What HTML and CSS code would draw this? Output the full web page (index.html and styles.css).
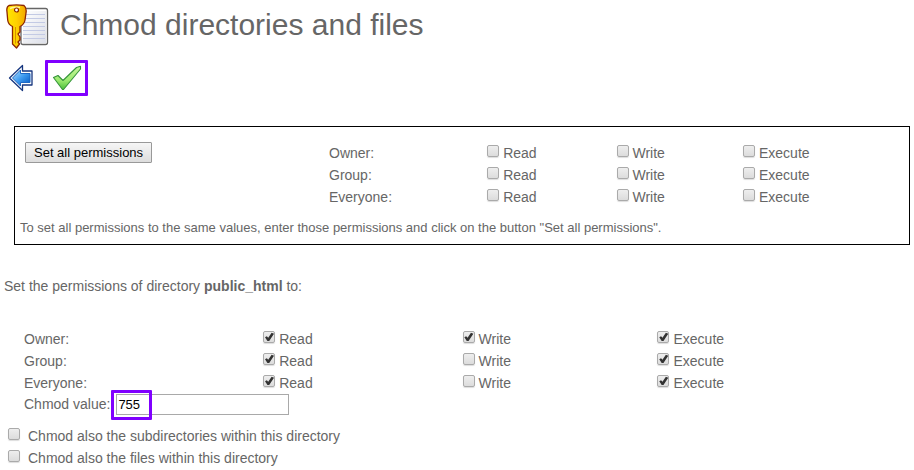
FILE: index.html
```html
<!DOCTYPE html>
<html lang="en">
<head>
<meta charset="utf-8">
<title>Chmod directories and files</title>
<link rel="stylesheet" href="styles.css">
</head>
<body>
<header class="header">
  <svg class="header-icon" viewBox="0 0 44 46" aria-hidden="true">
    <defs>
      <linearGradient id="gold" x1="0" x2="1"><stop offset="0" stop-color="#ffe600"/><stop offset=".5" stop-color="#ffd000"/><stop offset="1" stop-color="#f2a600"/></linearGradient>
      <linearGradient id="paper" x1="0" y1="0" x2="1" y2="1"><stop offset="0" stop-color="#fff"/><stop offset="1" stop-color="#dcdfe8"/></linearGradient>
    </defs>
    <rect x="15" y="4.500" width="26.500" height="36" rx="2" fill="#fff" stroke="#666" stroke-width="1.300"/>
    <rect x="17" y="7" width="23" height="32" fill="url(#paper)"/>
    <path d="M17 10.500h22M17 14.500h22M17 18.500h22M17 22.500h22M17 26.500h22M17 30.500h22M17 34.500h22" stroke="#c3cae4"/>
    <path d="M3 1.500C7 .8 14 .8 18 1.500C20 3 20.500 6 20 9L19 16C18.500 19 17 21 14 22.500V28L12 30L14 33V36L12 38L13.500 40L10.500 44L6.500 40V22.500C3 21 2 19 1.700 16L1 8C.5 5 1 2.500 3 1.500Z" fill="url(#gold)" stroke="#8c2600" stroke-width="1.300" stroke-linejoin="round"/>
    <path d="M4 4.500C7 3 10 3 14 3.500" fill="none" stroke="#fff39a" stroke-width="1.500"/>
    <path d="M9.500 23v16.500" stroke="#d89000" stroke-width="1"/>
    <circle cx="10.500" cy="6" r="2" fill="#fff" stroke="#8c2600" stroke-width="1.200"/>
  </svg>
  <h1 class="title">Chmod directories and files</h1>
</header>

<nav class="toolbar">
  <a class="tool" href="#" aria-label="Back">
    <svg width="26" height="28" viewBox="0 0 26 28" aria-hidden="true">
      <defs><linearGradient id="blue" x1="0" y1="0" x2="1" y2="1"><stop offset="0" stop-color="#b5e4ff"/><stop offset=".5" stop-color="#3e9bf0"/><stop offset="1" stop-color="#0054bd"/></linearGradient></defs>
      <path d="M1.500 14L14.500 1.500V7H24V21H14.500V26.500Z" fill="#fff" stroke="#16367f" stroke-width="1.300" stroke-linejoin="round"/>
      <path d="M4.500 14L12.500 6V9.500H22V18.500H12.500V22Z" fill="url(#blue)" stroke="#1b67c5"/>
    </svg>
  </a>
  <button class="tool tool-marked" type="submit" form="chmod" aria-label="Save">
    <svg width="30" height="26" viewBox="0 0 30 26" aria-hidden="true">
      <defs><linearGradient id="green" x1="0" y1="0" x2="0" y2="1"><stop offset="0" stop-color="#c8f59a"/><stop offset=".6" stop-color="#9bea70"/><stop offset="1" stop-color="#4cc03a"/></linearGradient></defs>
      <path d="M1.500 12.500L6 10.500L11 15.500L24.500 2.500L28.500 1.300V4L11.500 24.500H10.500Z" fill="url(#green)" stroke="#35943a" stroke-width="1.100" stroke-linejoin="round"/>
    </svg>
  </button>
</nav>

<form id="chmod">
  <section class="panel">
    <div class="panel-row">
      <button class="button" type="button">Set all permissions</button>
      <table class="perms perms-all">
        <tr><th scope="row">Owner:</th><td><label class="check"><input type="checkbox">Read</label></td><td><label class="check"><input type="checkbox">Write</label></td><td><label class="check"><input type="checkbox">Execute</label></td></tr>
        <tr><th scope="row">Group:</th><td><label class="check"><input type="checkbox">Read</label></td><td><label class="check"><input type="checkbox">Write</label></td><td><label class="check"><input type="checkbox">Execute</label></td></tr>
        <tr><th scope="row">Everyone:</th><td><label class="check"><input type="checkbox">Read</label></td><td><label class="check"><input type="checkbox">Write</label></td><td><label class="check"><input type="checkbox">Execute</label></td></tr>
      </table>
    </div>
    <p class="hint">To set all permissions to the same values, enter those permissions and click on the button "Set all permissions".</p>
  </section>

  <p class="intro">Set the permissions of directory <b>public_html</b> to:</p>

  <section class="entry">
    <table class="perms perms-entry">
      <tr><th scope="row">Owner:</th><td><label class="check"><input type="checkbox" checked>Read</label></td><td><label class="check"><input type="checkbox" checked>Write</label></td><td><label class="check"><input type="checkbox" checked>Execute</label></td></tr>
      <tr><th scope="row">Group:</th><td><label class="check"><input type="checkbox" checked>Read</label></td><td><label class="check"><input type="checkbox">Write</label></td><td><label class="check"><input type="checkbox" checked>Execute</label></td></tr>
      <tr><th scope="row">Everyone:</th><td><label class="check"><input type="checkbox" checked>Read</label></td><td><label class="check"><input type="checkbox">Write</label></td><td><label class="check"><input type="checkbox" checked>Execute</label></td></tr>
    </table>
    <div class="value">
      <label for="value">Chmod value:</label>
      <span class="value-field"><input class="text" id="value" type="text" value="755"></span>
    </div>
  </section>

  <div class="options">
    <label class="check check-wide"><input type="checkbox">Chmod also the subdirectories within this directory</label>
    <label class="check check-wide"><input type="checkbox">Chmod also the files within this directory</label>
  </div>
</form>
</body>
</html>
```
FILE: styles.css
```css
*,
*::before,
*::after { box-sizing: border-box; }

body {
  margin: 0;
  padding: 4px;
  background: #fff;
  color: #666;
  font: 14px/22px "Liberation Sans", Arial, sans-serif;
}

.header {
  display: flex;
  gap: 10px;
  padding-left: 2px;
}

.header-icon {
  width: 44px;
  height: 46px;
}

.title {
  margin: 0;
  font-size: 30px;
  line-height: 42px;
  font-weight: normal;
}

.toolbar {
  display: flex;
  align-items: center;
  gap: 11px;
  margin-top: 10px;
  padding-left: 4px;
}

.tool {
  display: flex;
  align-items: center;
  justify-content: center;
}

.tool-marked {
  width: 43px;
  height: 36px;
  padding: 0;
  border: 3px solid #8000ff;
  border-radius: 1px;
  background: #fff;
}

.panel {
  margin: 30px 0 0 10px;
  padding: 15px 5px 4px;
  border: 1px solid #000;
}

.panel-row {
  display: grid;
  grid-template-columns: 304fr 575fr;
  align-items: start;
  justify-items: start;
  padding-left: 5px;
}

.button {
  height: 21px;
  padding: 0 8px;
  border: 1px solid #999;
  border-radius: 1px;
  background: linear-gradient(#f6f6f6, #ddd);
  color: #000;
  font: 13px/19px "Liberation Sans", Arial, sans-serif;
}

.perms {
  width: 100%;
  table-layout: fixed;
  border-collapse: collapse;
}

.perms th,
.perms td {
  padding: 0;
  font-weight: normal;
  text-align: left;
}

.perms th { width: 27%; }
.perms td:nth-child(2) { width: 22.5%; }
.perms td:nth-child(3) { width: 22%; }
.perms-all th { width: 27.5%; }

.check {
  display: flex;
  gap: 4px;
}

.check-wide { gap: 8px; }

.check input {
  appearance: none;
  flex: none;
  width: 12px;
  height: 12px;
  margin: 3px 0;
  border: 1px solid #aaa;
  border-radius: 2px;
  background: linear-gradient(#eee, #dcdcdc);
  box-shadow: 0 1px 1px #ddd;
}

.check input:checked::before {
  content: "";
  display: block;
  width: 10px;
  height: 10px;
  background: #333;
  clip-path: polygon(8% 52%, 26% 42%, 40% 58%, 74% 8%, 98% 18%, 50% 90%, 32% 90%);
}

.hint {
  margin: 8px 0 0;
  font-size: 13px;
  line-height: 24px;
}

.intro { margin: 30px 0 0; }

.entry { margin: 31px 0 0 20px; }

.value {
  display: flex;
  gap: 6px;
  line-height: 20px;
}

.value-field { position: relative; }

.value-field::after {
  content: "";
  position: absolute;
  top: -4px;
  left: -5px;
  width: 41px;
  height: 30px;
  border: 3px solid #8000ff;
  border-radius: 1px;
  pointer-events: none;
}

.text {
  display: block;
  width: 173px;
  height: 21px;
  padding: 0 1px;
  border: 1px solid #a9a9a9;
  color: #000;
  font: 13px "Liberation Sans", Arial, sans-serif;
}

.options { margin: 10px 0 0 4px; }
```
